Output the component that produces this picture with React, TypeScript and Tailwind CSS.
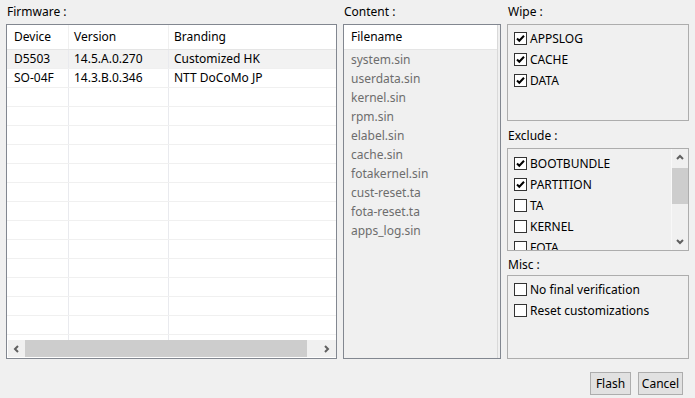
import React from 'react'

const firmware = [
  ['D5503', '14.5.A.0.270', 'Customized HK'],
  ['SO-04F', '14.3.B.0.346', 'NTT DoCoMo JP'],
]

const files = [
  'system.sin',
  'userdata.sin',
  'kernel.sin',
  'rpm.sin',
  'elabel.sin',
  'cache.sin',
  'fotakernel.sin',
  'cust-reset.ta',
  'fota-reset.ta',
  'apps_log.sin',
]

function Check({ checked, label }: { checked?: boolean; label: string }) {
  return (
    <div className="flex items-center h-[21px] shrink-0">
      <span className="w-[13px] h-[13px] border border-[#333333] bg-white flex items-center justify-center shrink-0">
        {checked && (
          <svg width="11" height="11" viewBox="0 0 11 11">
            <path d="M2 5.5 L4.3 7.8 L9 2.8" fill="none" stroke="#000" strokeWidth="2" />
          </svg>
        )}
      </span>
      <span className="ml-[3px] text-black whitespace-nowrap">{label}</span>
    </div>
  )
}

function Chevron({ dir }: { dir: 'left' | 'right' | 'up' | 'down' }) {
  const d = {
    left: 'M5 1 L2 4 L5 7',
    right: 'M3 1 L6 4 L3 7',
    up: 'M1 5 L4 2 L7 5',
    down: 'M1 3 L4 6 L7 3',
  }[dir]
  return (
    <svg width="8" height="8" viewBox="0 0 8 8">
      <path d={d} fill="none" stroke="#606060" strokeWidth="2" />
    </svg>
  )
}

export default function App() {
  const rows = [...firmware, ...Array.from({ length: 14 }, () => ['', '', ''])]

  return (
    <div className="w-[695px] h-[398px] bg-[#f0f0f0] flex flex-col font-['Noto_Sans'] text-[12px] text-black overflow-hidden">
      <div className="flex gap-[6px] px-[6px] h-[359px]">
        {/* Firmware */}
        <div className="w-[331px] flex flex-col">
          <div className="h-[24px] leading-[24px] pl-[1px] shrink-0">Firmware :</div>
          <div className="h-[335px] border border-[#828790] bg-white flex flex-col">
            <div className="flex h-[25px] shrink-0 border-b border-[#e5e5e5]">
              <div className="w-[62px] pl-[7px] border-r border-[#f0f0f0] flex items-center">Device</div>
              <div className="w-[100px] pl-[5px] border-r border-[#f0f0f0] flex items-center">Version</div>
              <div className="flex-1 pl-[5px] flex items-center">Branding</div>
            </div>
            <div className="h-[290px] overflow-hidden shrink-0">
              {rows.map((r, i) => (
                <div
                  key={i}
                  className={`flex h-[19px] border-b border-[#f0f0f0] ${i === 0 ? 'bg-[#f2f2f2]' : ''}`}
                >
                  <div className="w-[62px] pl-[7px] border-r border-[#e9eaee] leading-[18px] whitespace-nowrap">{r[0]}</div>
                  <div className="w-[100px] pl-[5px] border-r border-[#e9eaee] leading-[18px] whitespace-nowrap">{r[1]}</div>
                  <div className="flex-1 pl-[5px] leading-[18px] whitespace-nowrap">{r[2]}</div>
                </div>
              ))}
            </div>
            <div className="h-[17px] ml-[1px] flex bg-[#f0f0f0] shrink-0">
              <div className="w-[17px] flex items-center justify-center">
                <Chevron dir="left" />
              </div>
              <div className="w-[282px] bg-[#cdcdcd]" />
              <div className="flex-1 flex items-center justify-end pr-[6px]">
                <Chevron dir="right" />
              </div>
            </div>
          </div>
        </div>

        {/* Content */}
        <div className="w-[158px] flex flex-col">
          <div className="h-[24px] leading-[24px] pl-[1px] shrink-0">Content :</div>
          <div className="h-[335px] border border-[#828790] flex">
            <div className="flex-1 flex flex-col border-r border-[#d9d9d9] mr-[2px]">
              <div className="h-[25px] bg-white border-b border-[#e5e5e5] pl-[7px] flex items-center shrink-0">
                Filename
              </div>
              {files.map((f) => (
                <div key={f} className="h-[19px] leading-[19px] pl-[7px] text-[#6d6d6d]">
                  {f}
                </div>
              ))}
            </div>
          </div>
        </div>

        {/* Right column */}
        <div className="w-[182px] flex flex-col">
          <div className="h-[24px] leading-[24px] pl-[1px] shrink-0">Wipe :</div>
          <div className="h-[97px] border border-[#adadad] pt-[3px] pl-[6px] flex flex-col shrink-0">
            <Check checked label="APPSLOG" />
            <Check checked label="CACHE" />
            <Check checked label="DATA" />
          </div>
          <div className="h-[24px] leading-[24px] pl-[1px] mt-[3px] shrink-0">Exclude :</div>
          <div className="h-[103px] border border-[#adadad] flex shrink-0">
            <div className="flex-1 pt-[4px] pl-[6px] flex flex-col overflow-hidden">
              <Check checked label="BOOTBUNDLE" />
              <Check checked label="PARTITION" />
              <Check label="TA" />
              <Check label="KERNEL" />
              <Check label="FOTA" />
            </div>
            <div className="w-[17px] border-l border-[#f8f8f8] flex flex-col bg-[#f0f0f0]">
              <div className="h-[18px] flex items-center justify-center">
                <Chevron dir="up" />
              </div>
              <div className="h-[36px] bg-[#cdcdcd] mt-[1px]" />
              <div className="flex-1" />
              <div className="h-[18px] flex items-center justify-center">
                <Chevron dir="down" />
              </div>
            </div>
          </div>
          <div className="h-[24px] pt-[4px] leading-[20px] pl-[1px] shrink-0">Misc :</div>
          <div className="h-[84px] border border-[#adadad] pt-[3px] pl-[6px] flex flex-col shrink-0">
            <Check label="No final verification" />
            <Check label="Reset customizations" />
          </div>
        </div>
      </div>

      <div className="flex justify-end gap-[7px] pr-[12px] mt-[13px]">
        <button className="w-[41px] h-[23px] border border-[#adadad] bg-[#e1e1e1] flex items-center justify-center">
          Flash
        </button>
        <button className="w-[45px] h-[23px] border border-[#adadad] bg-[#e1e1e1] flex items-center justify-center">
          Cancel
        </button>
      </div>
    </div>
  )
}
